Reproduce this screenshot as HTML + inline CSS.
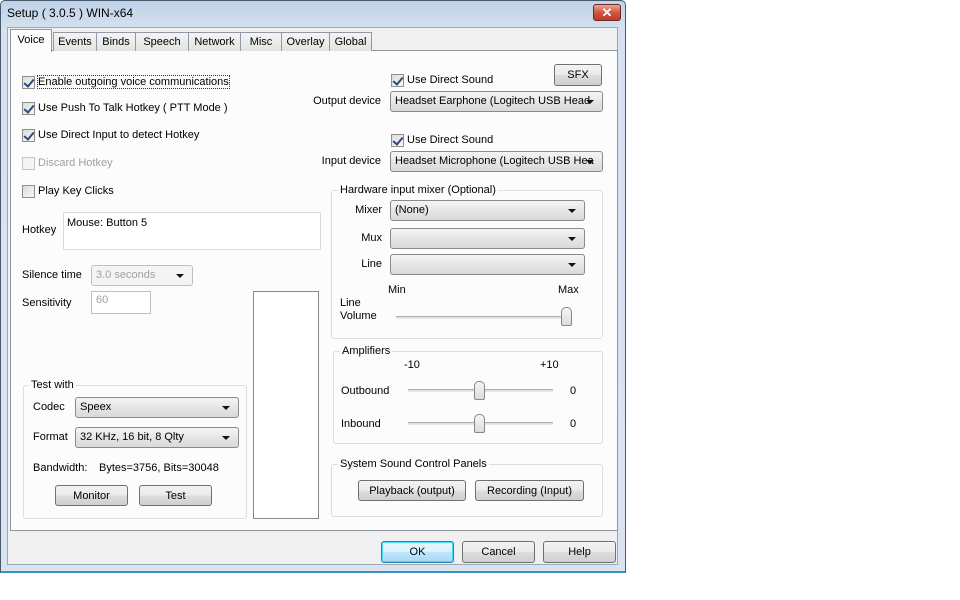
<!DOCTYPE html>
<html><head><meta charset="utf-8"><style>
*{box-sizing:border-box;margin:0;padding:0}
body{width:960px;height:600px;background:#fff;font-family:"Liberation Sans",sans-serif;font-size:11px;color:#000;position:relative;overflow:hidden}
.a{position:absolute;white-space:nowrap}
.r{position:absolute;white-space:nowrap;text-align:right}
.win{position:absolute;left:0;top:0;width:626px;height:573px;background:linear-gradient(#bfd2e8,#d6e2ef 30px,#d9e4f0);border:1px solid #4a5968;border-bottom:2px solid #3d8fc8;border-radius:5px 5px 0 0}
.client{position:absolute;left:7px;top:27px;width:611px;height:538px;background:#f0f0f0;border:1px solid #9aa9b8}
.tab{position:absolute;top:32px;height:19px;border:1px solid #8f98a3;border-bottom:none;background:linear-gradient(#f4f4f4,#e3e3e3);padding:3px 0 0 0;text-align:center}
.panel{position:absolute;left:10px;top:50px;width:608px;height:481px;background:#fcfcfc;border:1px solid #8d969f}
.cb{position:absolute;width:13px;height:13px;border:1px solid #8e8f8f;background:linear-gradient(135deg,#dcdcdc,#f8f8f8)}
.cb.c::after{content:"";position:absolute;left:3px;top:0px;width:4px;height:8px;border:solid #2b4a7a;border-width:0 2px 2px 0;transform:rotate(40deg)}
.combo{position:absolute;height:21px;border:1px solid #8a8a8a;border-radius:3px;background:linear-gradient(#f5f5f5,#e6e6e6 50%,#d9d9d9);padding:3px 18px 0 4px;overflow:hidden;white-space:nowrap}
.combo::after{content:"";position:absolute;right:8px;top:8px;border:4px solid transparent;border-top:4px solid #111;border-bottom:none}
.btn{position:absolute;height:21px;border:1px solid #707070;border-radius:3px;background:linear-gradient(#f2f2f2,#ebebeb 50%,#dddddd 51%,#cfcfcf);text-align:center;padding-top:4px}
.grp{position:absolute;border:1px solid #d5dfe5;border-radius:3px}
.gt{position:absolute;background:#fcfcfc;padding:0 2px}
.edit{position:absolute;border:1px solid #abadb3;background:#fff}
.track{position:absolute;height:3px;border-top:1px solid #b0b0b0;border-bottom:1px solid #e8e8e8;background:#e0e0e0}
.thumb{position:absolute;width:11px;height:19px;border:1px solid #888;border-radius:5px 5px 2px 2px;background:linear-gradient(#f6f6f6,#dcdcdc)}
.gray{color:#a0a0a0}
</style></head><body>
<div class="win"></div>
<div class="a" style="left:7px;top:6px;font-size:12px">Setup ( 3.0.5 ) WIN-x64</div>
<div class="a" style="left:593px;top:4px;width:28px;height:17px;border:1px solid #6b2b22;border-radius:3px;background:linear-gradient(#e9a796,#d2553f 50%,#c23a22);color:#fff;font-weight:bold;text-align:center;font-size:13px;line-height:15px">✕</div>
<div class="client"></div>
<div class="panel"></div>
<div class="tab" style="left:53px;width:44px">Events</div>
<div class="tab" style="left:96px;width:40px">Binds</div>
<div class="tab" style="left:135px;width:54px">Speech</div>
<div class="tab" style="left:188px;width:53px">Network</div>
<div class="tab" style="left:240px;width:42px">Misc</div>
<div class="tab" style="left:281px;width:49px">Overlay</div>
<div class="tab" style="left:329px;width:43px">Global</div>
<div class="tab" style="left:10px;top:29px;width:42px;height:23px;background:#fcfcfc;border-bottom:none;padding-top:4px">Voice</div>

<div class="cb c" style="left:22px;top:76px"></div><div class="a" style="left:38px;top:76px;outline:1px dotted #333">Enable outgoing voice communications</div>
<div class="cb c" style="left:22px;top:102px"></div><div class="a" style="left:38px;top:102px">Use Push To Talk Hotkey ( PTT Mode )</div>
<div class="cb c" style="left:22px;top:129px"></div><div class="a" style="left:38px;top:129px">Use Direct Input to detect Hotkey</div>
<div class="cb" style="left:22px;top:157px;border-color:#c5c5c5;background:#f4f4f4"></div><div class="a gray" style="left:38px;top:157px">Discard Hotkey</div>
<div class="cb" style="left:22px;top:185px"></div><div class="a" style="left:38px;top:185px">Play Key Clicks</div>
<div class="a" style="left:22px;top:224px">Hotkey</div>
<div class="edit" style="left:63px;top:212px;width:258px;height:38px;border-color:#d9dadd"></div><div class="a" style="left:67px;top:217px">Mouse: Button 5</div>
<div class="a" style="left:22px;top:269px">Silence time</div>
<div class="combo gray" style="left:91px;top:265px;width:102px;height:21px;border-color:#c0c0c0;background:#f4f4f4">3.0 seconds</div>
<div class="a" style="left:22px;top:297px">Sensitivity</div>
<div class="edit gray" style="left:91px;top:291px;width:60px;height:23px;border-color:#c0c0c0;padding:2px 0 0 4px">60</div>
<div class="edit" style="left:253px;top:291px;width:66px;height:228px;border-color:#828790"></div>

<div class="grp" style="left:23px;top:385px;width:224px;height:134px"></div>
<div class="a gt" style="left:29px;top:379px">Test with</div>
<div class="a" style="left:33px;top:401px">Codec</div>
<div class="combo" style="left:75px;top:397px;width:164px">Speex</div>
<div class="a" style="left:33px;top:431px">Format</div>
<div class="combo" style="left:75px;top:427px;width:164px">32 KHz, 16 bit, 8 Qlty</div>
<div class="a" style="left:33px;top:462px">Bandwidth:</div>
<div class="a" style="left:99px;top:462px">Bytes=3756, Bits=30048</div>
<div class="btn" style="left:55px;top:485px;width:73px">Monitor</div>
<div class="btn" style="left:139px;top:485px;width:73px">Test</div>

<div class="cb c" style="left:391px;top:74px"></div><div class="a" style="left:407px;top:74px">Use Direct Sound</div>
<div class="btn" style="left:554px;top:64px;width:48px;height:22px">SFX</div>
<div class="r" style="right:579px;top:95px">Output device</div>
<div class="combo" style="left:390px;top:91px;width:213px">Headset Earphone (Logitech USB Head</div>
<div class="cb c" style="left:391px;top:134px"></div><div class="a" style="left:407px;top:134px">Use Direct Sound</div>
<div class="r" style="right:579px;top:155px">Input device</div>
<div class="combo" style="left:390px;top:151px;width:213px">Headset Microphone (Logitech USB Hea</div>

<div class="grp" style="left:331px;top:190px;width:272px;height:149px"></div>
<div class="a gt" style="left:338px;top:184px">Hardware input mixer (Optional)</div>
<div class="r" style="right:578px;top:204px">Mixer</div>
<div class="combo" style="left:390px;top:200px;width:195px">(None)</div>
<div class="r" style="right:578px;top:232px">Mux</div>
<div class="combo" style="left:390px;top:228px;width:195px"></div>
<div class="r" style="right:578px;top:258px">Line</div>
<div class="combo" style="left:390px;top:254px;width:195px"></div>
<div class="a" style="left:388px;top:284px">Min</div>
<div class="a" style="left:558px;top:284px">Max</div>
<div class="a" style="left:340px;top:297px;line-height:13px">Line<br>Volume</div>
<div class="track" style="left:396px;top:316px;width:175px"></div>
<div class="thumb" style="left:561px;top:307px"></div>

<div class="grp" style="left:333px;top:351px;width:270px;height:93px"></div>
<div class="a gt" style="left:340px;top:345px">Amplifiers</div>
<div class="a" style="left:404px;top:359px">-10</div>
<div class="a" style="left:540px;top:359px">+10</div>
<div class="a" style="left:341px;top:385px">Outbound</div>
<div class="track" style="left:408px;top:389px;width:145px"></div>
<div class="thumb" style="left:474px;top:381px"></div>
<div class="a" style="left:570px;top:385px">0</div>
<div class="a" style="left:341px;top:418px">Inbound</div>
<div class="track" style="left:408px;top:422px;width:145px"></div>
<div class="thumb" style="left:474px;top:414px"></div>
<div class="a" style="left:570px;top:418px">0</div>

<div class="grp" style="left:331px;top:464px;width:272px;height:53px"></div>
<div class="a gt" style="left:338px;top:458px">System Sound Control Panels</div>
<div class="btn" style="left:358px;top:480px;width:108px">Playback (output)</div>
<div class="btn" style="left:475px;top:480px;width:109px">Recording (Input)</div>

<div class="btn" style="left:381px;top:541px;width:73px;height:22px;border-color:#3c7fb1;box-shadow:inset 0 0 0 1px #48d8fb;background:linear-gradient(#eaf6fd,#d9f0fc 50%,#bee6fd 51%,#a7d9f5)">OK</div>
<div class="btn" style="left:462px;top:541px;width:73px;height:22px">Cancel</div>
<div class="btn" style="left:543px;top:541px;width:73px;height:22px">Help</div>
</body></html>
